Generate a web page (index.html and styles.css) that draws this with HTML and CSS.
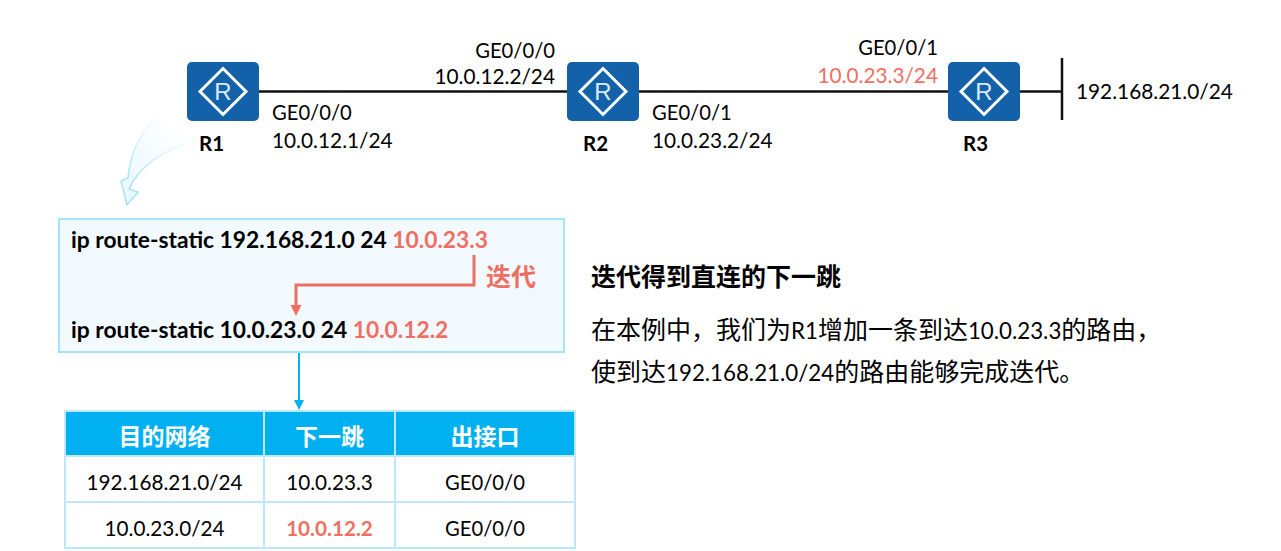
FILE: index.html
```html
<!DOCTYPE html>
<html lang="zh">
<head>
<meta charset="utf-8">
<title>迭代得到直连的下一跳</title>
<link rel="stylesheet" href="styles.css">
</head>
<body>
<main class="slide">
  <section class="topology">
    <svg class="wires" width="1281" height="215" viewBox="0 0 1281 215" aria-hidden="true">
      <defs>
        <linearGradient id="fade" gradientUnits="userSpaceOnUse" x1="185" y1="122" x2="125" y2="190">
          <stop offset="0" stop-color="#ffffff"/>
          <stop offset="1" stop-color="#eaf8ff"/>
        </linearGradient>
        <linearGradient id="fade-line" gradientUnits="userSpaceOnUse" x1="175" y1="118" x2="126" y2="180">
          <stop offset="0" stop-color="#ffffff"/>
          <stop offset="0.35" stop-color="#e6f7fe"/>
          <stop offset="1" stop-color="#a5e3fb"/>
        </linearGradient>
      </defs>
      <path class="wire" d="M259 91.500H567M639 91.500H948M1020 91.500H1062"/>
      <path class="wire" d="M1062 58V120"/>
      <path class="sweep" d="M158 117C140 130 130 155 128 178L121 181L127 205L138 192L129 189C140 165 165 148 198 141"/>
    </svg>
    <div class="router r1"><svg viewBox="0 0 72 59" class="router-icon" aria-hidden="true"><rect width="72" height="59" rx="5" class="router-bg"/><path d="M36 6.500L59 29.500L36 52.500L13 29.500Z" class="router-mark"/></svg><span class="router-r">R</span></div>
    <div class="router r2"><svg viewBox="0 0 72 59" class="router-icon" aria-hidden="true"><rect width="72" height="59" rx="5" class="router-bg"/><path d="M36 6.500L59 29.500L36 52.500L13 29.500Z" class="router-mark"/></svg><span class="router-r">R</span></div>
    <div class="router r3"><svg viewBox="0 0 72 59" class="router-icon" aria-hidden="true"><rect width="72" height="59" rx="5" class="router-bg"/><path d="M36 6.500L59 29.500L36 52.500L13 29.500Z" class="router-mark"/></svg><span class="router-r">R</span></div>
    <b class="name n1">R1</b>
    <b class="name n2">R2</b>
    <b class="name n3">R3</b>
    <p class="port p1"><span class="ge">GE0/0/0</span><br>10.0.12.1/24</p>
    <p class="port p2"><span class="ge">GE0/0/0</span><br>10.0.12.2/24</p>
    <p class="port p3"><span class="ge">GE0/0/1</span><br>10.0.23.2/24</p>
    <p class="port p4"><span class="ge">GE0/0/1</span><br><span class="red">10.0.23.3/24</span></p>
    <p class="port p5">192.168.21.0/24</p>
  </section>

  <section class="lower">
    <div class="left">
      <div class="routes">
        <p class="cmd">ip route-static 192.168.21.0 24 <span class="red">10.0.23.3</span></p>
        <div class="iter-row">
          <svg class="iter-arrow" width="186" height="62" viewBox="0 0 186 62" aria-hidden="true">
            <path class="iter-line" d="M184 0V30H6V52"/>
            <path class="iter-head" d="M0.500 50H11.500L6 61Z"/>
          </svg>
          <b class="iter-label">迭代</b>
        </div>
        <p class="cmd">ip route-static 10.0.23.0 24 <span class="red">10.0.12.2</span></p>
      </div>
      <svg class="down-arrow" width="12" height="57" viewBox="0 0 12 57" aria-hidden="true">
        <path d="M6 0V50" class="down-line"/>
        <path d="M1 47H11L6 57Z" class="down-head"/>
      </svg>
      <table class="fib">
        <thead>
          <tr><th class="c1">目的网络</th><th class="c2">下一跳</th><th class="c3">出接口</th></tr>
        </thead>
        <tbody>
          <tr><td>192.168.21.0/24</td><td>10.0.23.3</td><td class="ge">GE0/0/0</td></tr>
          <tr><td>10.0.23.0/24</td><td class="red strong">10.0.12.2</td><td class="ge">GE0/0/0</td></tr>
        </tbody>
      </table>
    </div>
    <div class="note">
      <h2 class="note-title">迭代得到直连的下一跳</h2>
      <p class="note-text">在本例中，我们为<span class="latin">R1</span>增加一条到达<span class="latin">10.0.23.3</span>的路由，<br>使到达<span class="latin">192.168.21.0/24</span>的路由能够完成迭代。</p>
    </div>
  </section>
</main>
</body>
</html>
```
FILE: styles.css
```css
* { box-sizing: border-box; }
html, body { margin: 0; padding: 0; background: #fff; }
body {
  width: 1281px;
  height: 551px;
  overflow: hidden;
  font-family: Lato, "Noto Sans CJK SC", sans-serif;
  color: #000;
}
p, h2 { margin: 0; }
.slide { display: flex; flex-direction: column; width: 1281px; height: 551px; }
.topology { position: relative; height: 218px; flex: none; }
.wires { position: absolute; left: 0; top: 0; }
.wire { fill: none; stroke: #111; stroke-width: 2.500; }
.sweep { fill: url(#fade); stroke: url(#fade-line); stroke-width: 1.500; }
.router { position: absolute; top: 62px; width: 72px; height: 59px; }
.r1 { left: 187px; }
.r2 { left: 567px; }
.r3 { left: 948px; }
.router-icon { display: block; width: 72px; height: 59px; }
.router-bg { fill: #1261a9; }
.router-mark { fill: none; stroke: #fff; stroke-width: 3; }
.router-r {
  position: absolute; left: 0; right: 0; top: 17px;
  text-align: center; color: #dbe9f5;
  font: 400 24px/25px "Liberation Sans", sans-serif;
}
.name { position: absolute; top: 132px; font-size: 20.500px; line-height: 23px; font-weight: 700; }
.n1 { left: 199px; }
.n2 { left: 583px; }
.n3 { left: 963px; }
.port { position: absolute; font-size: 20.800px; line-height: 28px; white-space: nowrap; }
.ge { font-size: 20.200px; }
.p1 { left: 272px; top: 98px; }
.p2 { right: 726px; top: 37px; text-align: right; line-height: 26px; }
.p3 { left: 652px; top: 98px; }
.p4 { right: 343px; top: 33px; text-align: right; }
.p5 { left: 1076px; top: 77px; }
.red { color: #ef6f62; }
.strong { font-weight: 700; }
.lower { display: flex; align-items: flex-start; }
.left { width: 591px; flex: none; padding-left: 58px; }
.routes {
  width: 507px; height: 135px;
  padding: 6px 0 0 11px;
  background: #f3faff;
  border: 2px solid #a5e3fb;
}
.cmd { font-size: 22.800px; line-height: 26px; font-weight: 700; white-space: nowrap; }
.iter-row { display: flex; align-items: flex-start; height: 64px; padding: 3px 0 0 219px; }
.iter-arrow { flex: none; overflow: visible; }
.iter-line { fill: none; stroke: #ee6f62; stroke-width: 3; }
.iter-head { fill: #ee6f62; }
.iter-label { color: #ee6f62; font-size: 25px; line-height: 30px; margin-left: 10px; margin-top: 6px; }
.down-arrow { display: block; margin-left: 235px; }
.down-line { fill: none; stroke: #00b0f0; stroke-width: 2; }
.down-head { fill: #00b0f0; }
.fib {
  margin-left: 6px;
  width: 512px;
  table-layout: fixed;
  border-collapse: collapse;
  font-size: 20.700px;
  text-align: center;
}
.fib th, .fib td { border: 2px solid #bde8f7; padding: 0; }
.fib th { height: 45px; padding-top: 2px; background: #00b0f0; color: #fff; font-size: 23px; font-weight: 700; }
.fib td { height: 46px; padding-top: 5px; }
.fib td.ge { font-size: 20.200px; }
.c1 { width: 199px; }
.c2 { width: 131px; }
.note { padding-top: 42px; }
.note-title { font-size: 25px; line-height: 32px; font-weight: 700; }
.note-text { margin-top: 17px; font-size: 25px; line-height: 41px; white-space: nowrap; }
.latin { font-size: 22.300px; }
```
